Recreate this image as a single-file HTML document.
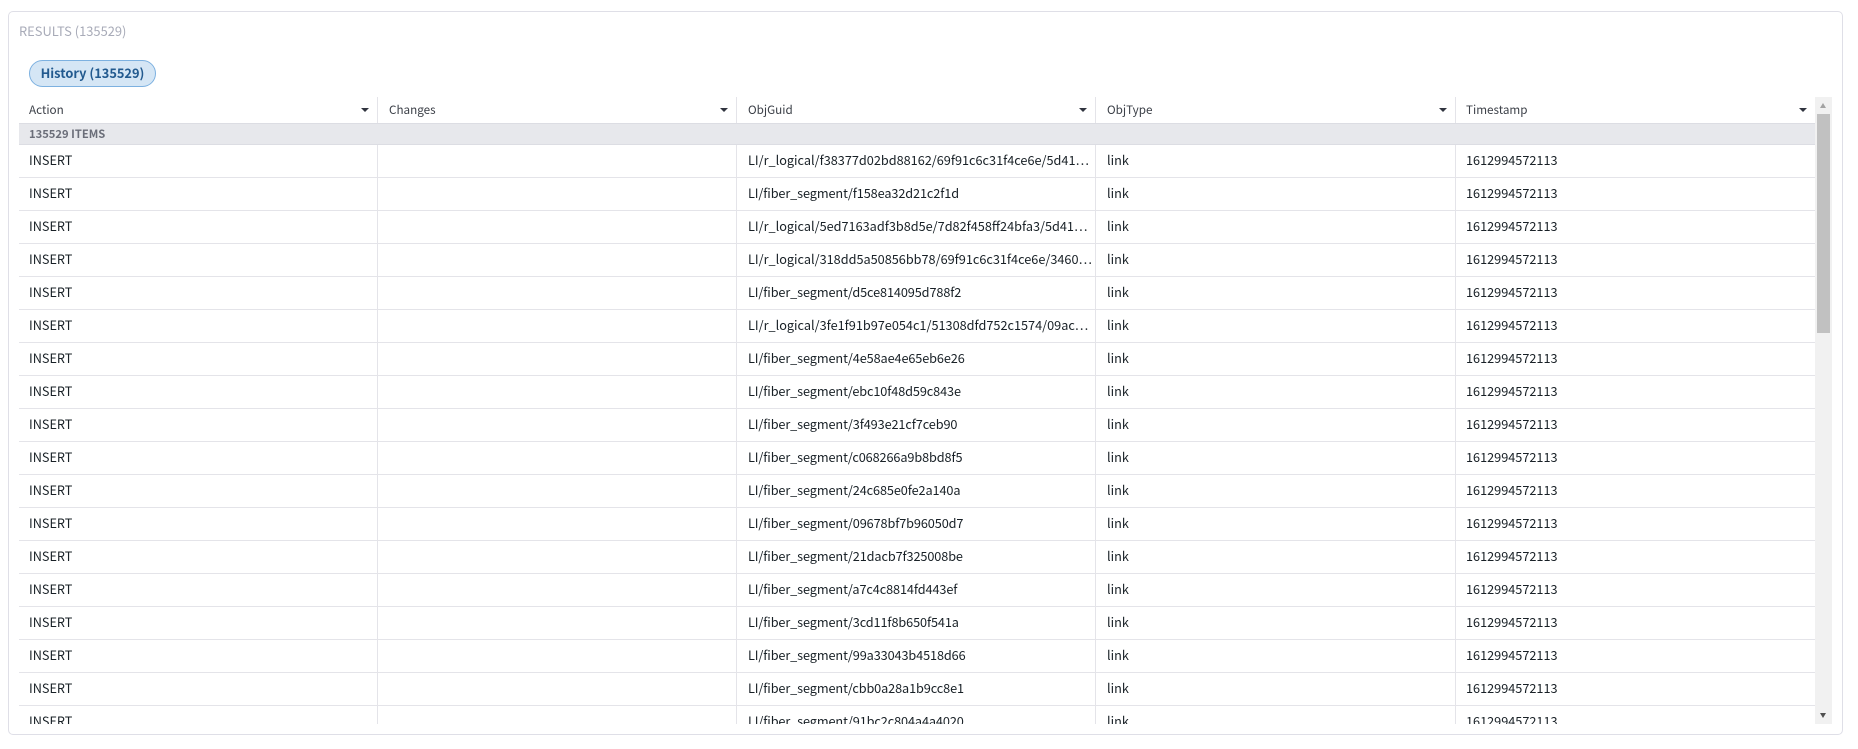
<!DOCTYPE html>
<html><head><meta charset="utf-8"><title>Results</title>
<style>
*{box-sizing:border-box}
html,body{margin:0;padding:0;width:1858px;height:749px;overflow:hidden;background:#fff}
body{font-family:"Noto Sans CJK JP","Liberation Sans",sans-serif;font-size:12.7px;color:#182026;position:relative}
.panel{position:absolute;left:8px;top:11px;width:1835px;height:724px;border:1px solid #dfdfe7;border-radius:5px;background:#fff}
.title{position:absolute;left:19px;top:22px;line-height:18px;font-size:12.9px;color:#a8abb8}
.pill{position:absolute;left:29px;top:60px;width:127px;height:27px;border:1px solid #7db1e0;border-radius:14px;background:#d5e6f5;color:#225a8f;font-weight:700;font-size:12.8px;line-height:24px;text-align:center}
.grid{position:absolute;left:19px;top:97px;width:1796px;height:627px;overflow:hidden}
.head{position:absolute;left:0;top:0;width:1796px;height:27px;border-bottom:1px solid #dcdde3;color:#3c4048;font-size:11.7px}
.group{position:absolute;left:0;top:27px;width:1796px;height:21px;background:#e7e8ec;border-bottom:1px solid #dcdde3;font-weight:700;color:#6b6e79;line-height:20px;padding-left:10px;font-size:11.2px}
.row{position:absolute;left:0;width:1796px;height:33px;border-bottom:1px solid #e4e4e9}
.c{position:absolute;top:0;height:100%;white-space:nowrap;overflow:hidden;line-height:30px;padding-left:10px}
.head .c{line-height:26px;padding-left:10px}
.c:nth-child(1){left:0;width:359px}
.c:nth-child(2){left:358px;width:360px;padding-left:11px}
.c:nth-child(3){left:717px;width:360px;padding-left:12px}
.c:nth-child(4){left:1077px;width:360px;padding-left:11px}
.c:nth-child(5){left:1436px;width:360px;padding-left:11px}
.head .c:nth-child(2){padding-left:12px}
.head .c:nth-child(3){padding-left:12px}
.head .c:nth-child(4){padding-left:11px}
.head .c:nth-child(5){padding-left:11px}
.c:nth-child(-n+4){border-right:1px solid #e4e4e9}
.f{letter-spacing:-.1px}
.arr{position:absolute;top:11px;right:8px;width:0;height:0;border-left:4px solid transparent;border-right:4px solid transparent;border-top:4px solid #30343f}
.sb{position:absolute;left:1815px;top:97px;width:17px;height:627px;background:#f1f1f1}
.th{position:absolute;left:2px;top:17px;width:13px;height:219px;background:#c1c1c1}
.up{position:absolute;left:5px;top:6px;width:0;height:0;border-left:3.5px solid transparent;border-right:3.5px solid transparent;border-bottom:5px solid #a3a3a3}
.dn{position:absolute;left:5px;top:616px;width:0;height:0;border-left:3.5px solid transparent;border-right:3.5px solid transparent;border-top:5px solid #505050}
</style></head><body>
<div class="panel"></div>
<div class="title">RESULTS (135529)</div>
<div class="pill">History (135529)</div>
<div class="grid">
<div class="head"><div class="c">Action<i class="arr"></i></div><div class="c">Changes<i class="arr"></i></div><div class="c">ObjGuid<i class="arr"></i></div><div class="c">ObjType<i class="arr"></i></div><div class="c">Timestamp<i class="arr"></i></div></div>
<div class="group">135529 ITEMS</div>
<div class="row" style="top:48px"><div class="c">INSERT</div><div class="c"></div><div class="c">LI/r_logical/f38377d02bd88162/69f91c6c31f4ce6e/5d41…</div><div class="c">link</div><div class="c">1612994572113</div></div>
<div class="row" style="top:81px"><div class="c">INSERT</div><div class="c"></div><div class="c f">LI/fiber_segment/f158ea32d21c2f1d</div><div class="c">link</div><div class="c">1612994572113</div></div>
<div class="row" style="top:114px"><div class="c">INSERT</div><div class="c"></div><div class="c">LI/r_logical/5ed7163adf3b8d5e/7d82f458ff24bfa3/5d41…</div><div class="c">link</div><div class="c">1612994572113</div></div>
<div class="row" style="top:147px"><div class="c">INSERT</div><div class="c"></div><div class="c">LI/r_logical/318dd5a50856bb78/69f91c6c31f4ce6e/3460…</div><div class="c">link</div><div class="c">1612994572113</div></div>
<div class="row" style="top:180px"><div class="c">INSERT</div><div class="c"></div><div class="c f">LI/fiber_segment/d5ce814095d788f2</div><div class="c">link</div><div class="c">1612994572113</div></div>
<div class="row" style="top:213px"><div class="c">INSERT</div><div class="c"></div><div class="c">LI/r_logical/3fe1f91b97e054c1/51308dfd752c1574/09ac…</div><div class="c">link</div><div class="c">1612994572113</div></div>
<div class="row" style="top:246px"><div class="c">INSERT</div><div class="c"></div><div class="c f">LI/fiber_segment/4e58ae4e65eb6e26</div><div class="c">link</div><div class="c">1612994572113</div></div>
<div class="row" style="top:279px"><div class="c">INSERT</div><div class="c"></div><div class="c f">LI/fiber_segment/ebc10f48d59c843e</div><div class="c">link</div><div class="c">1612994572113</div></div>
<div class="row" style="top:312px"><div class="c">INSERT</div><div class="c"></div><div class="c f">LI/fiber_segment/3f493e21cf7ceb90</div><div class="c">link</div><div class="c">1612994572113</div></div>
<div class="row" style="top:345px"><div class="c">INSERT</div><div class="c"></div><div class="c f">LI/fiber_segment/c068266a9b8bd8f5</div><div class="c">link</div><div class="c">1612994572113</div></div>
<div class="row" style="top:378px"><div class="c">INSERT</div><div class="c"></div><div class="c f">LI/fiber_segment/24c685e0fe2a140a</div><div class="c">link</div><div class="c">1612994572113</div></div>
<div class="row" style="top:411px"><div class="c">INSERT</div><div class="c"></div><div class="c f">LI/fiber_segment/09678bf7b96050d7</div><div class="c">link</div><div class="c">1612994572113</div></div>
<div class="row" style="top:444px"><div class="c">INSERT</div><div class="c"></div><div class="c f">LI/fiber_segment/21dacb7f325008be</div><div class="c">link</div><div class="c">1612994572113</div></div>
<div class="row" style="top:477px"><div class="c">INSERT</div><div class="c"></div><div class="c f">LI/fiber_segment/a7c4c8814fd443ef</div><div class="c">link</div><div class="c">1612994572113</div></div>
<div class="row" style="top:510px"><div class="c">INSERT</div><div class="c"></div><div class="c f">LI/fiber_segment/3cd11f8b650f541a</div><div class="c">link</div><div class="c">1612994572113</div></div>
<div class="row" style="top:543px"><div class="c">INSERT</div><div class="c"></div><div class="c f">LI/fiber_segment/99a33043b4518d66</div><div class="c">link</div><div class="c">1612994572113</div></div>
<div class="row" style="top:576px"><div class="c">INSERT</div><div class="c"></div><div class="c f">LI/fiber_segment/cbb0a28a1b9cc8e1</div><div class="c">link</div><div class="c">1612994572113</div></div>
<div class="row" style="top:609px"><div class="c">INSERT</div><div class="c"></div><div class="c f">LI/fiber_segment/91bc2c804a4a4020</div><div class="c">link</div><div class="c">1612994572113</div></div>
</div>
<div class="sb"><div class="up"></div><div class="th"></div><div class="dn"></div></div>
</body></html>
